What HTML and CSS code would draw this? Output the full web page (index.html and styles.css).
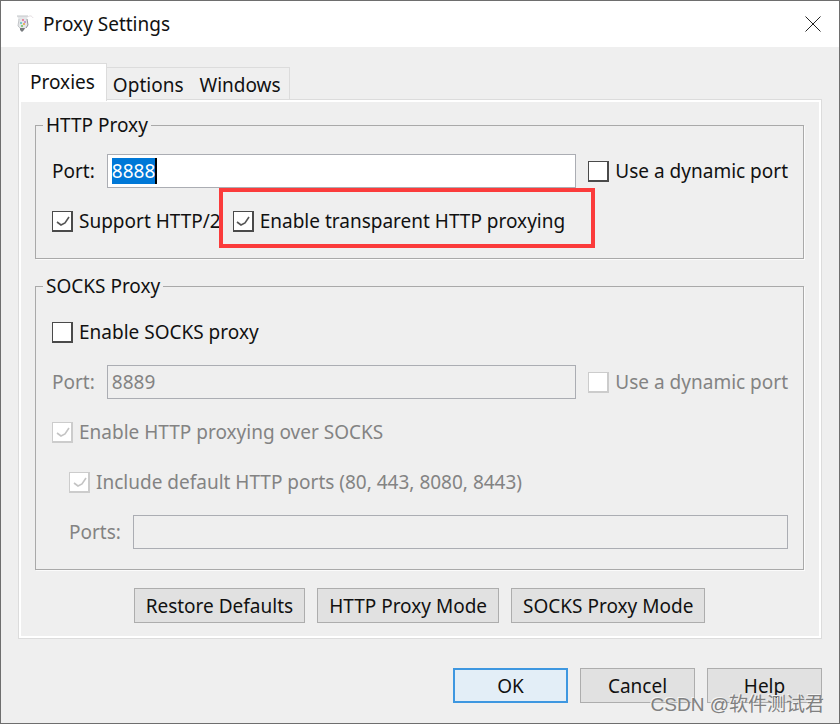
FILE: index.html
```
<!DOCTYPE html>
<html lang="en">
<head>
<meta charset="utf-8">
<title>Proxy Settings</title>
<link rel="stylesheet" href="styles.css">
</head>
<body>

<div class="window">
    <header class="titlebar">
        <svg class="app-icon" viewBox="0 0 18 18" aria-hidden="true">
            <path d="M1 1 L12 1 L11 4 L12 11 L9 14 L4 14 L2 11 L3 5 Z" fill="#e4e6e8"/>
            <path d="M1 1 L12 1 M3 4 L2 11 L4 13" fill="none" stroke="#c3c6c9"/>
            <path d="M11 4 L12 10 L10 13" fill="none" stroke="#8e9296"/>
            <path d="M4 13 L9 13 L8 15 L6 17 L4 15 Z" fill="#777b7e"/>
            <path d="M12 2 C14 0 16 1 17 3" fill="none" stroke="#e2dcdf"/>
            <circle cx="7" cy="5" r="1" fill="#e86a8a"/>
            <circle cx="5" cy="8" r="1" fill="#58bfc0"/>
            <circle cx="8" cy="9" r="1" fill="#e9a33c"/>
            <circle cx="6" cy="11" r="1" fill="#6fbf5b"/>
            <circle cx="9" cy="7" r="1" fill="#b582cf"/>
        </svg>
        <h1>Proxy Settings</h1>
        <button class="close" type="button" aria-label="Close">
            <svg viewBox="0 0 16 16" aria-hidden="true"><path d="M0.5 0.5 L15.5 15.5 M15.5 0.5 L0.5 15.5"/></svg>
        </button>
    </header>

    <form class="content">
        <div class="tabs" role="tablist">
            <button class="tab active" type="button" role="tab" aria-selected="true">Proxies</button>
            <div class="tab-group">
                <button class="tab" type="button" role="tab">Options</button>
                <button class="tab" type="button" role="tab">Windows</button>
            </div>
        </div>

        <div class="panel" role="tabpanel">
            <fieldset class="group">
                <legend>HTTP Proxy</legend>
                <div class="row">
                    <label class="field-label" for="http-port">Port:</label>
                    <span class="field">
                        <input class="text" id="http-port" type="text" value="8888">
                        <span class="caret"></span>
                    </span>
                    <label class="check"><input type="checkbox">Use a dynamic port</label>
                </div>
                <div class="row">
                    <label class="check"><input type="checkbox" checked>Support HTTP/2</label>
                    <label class="check highlight"><input type="checkbox" checked>Enable transparent HTTP proxying</label>
                </div>
            </fieldset>

            <fieldset class="group">
                <legend>SOCKS Proxy</legend>
                <div class="row">
                    <label class="check"><input type="checkbox">Enable SOCKS proxy</label>
                </div>
                <div class="row disabled">
                    <label class="field-label" for="socks-port">Port:</label>
                    <span class="field"><input class="text" id="socks-port" type="text" value="8889" disabled></span>
                    <label class="check"><input type="checkbox" disabled>Use a dynamic port</label>
                </div>
                <div class="row disabled">
                    <label class="check"><input type="checkbox" checked disabled>Enable HTTP proxying over SOCKS</label>
                </div>
                <div class="row disabled indent">
                    <label class="check"><input type="checkbox" checked disabled>Include default HTTP ports (80, 443, 8080, 8443)</label>
                </div>
                <div class="row disabled indent">
                    <label class="field-label" for="ports">Ports:</label>
                    <span class="field"><input class="text" id="ports" type="text" disabled></span>
                </div>
            </fieldset>

            <div class="buttons modes">
                <button class="btn" type="button">Restore Defaults</button>
                <button class="btn" type="button">HTTP Proxy Mode</button>
                <button class="btn" type="button">SOCKS Proxy Mode</button>
            </div>
        </div>

        <div class="buttons actions">
            <button class="btn primary" type="button">OK</button>
            <button class="btn" type="button">Cancel</button>
            <button class="btn" type="button">Help</button>
        </div>
    </form>

    <div class="watermark">CSDN @软件测试君</div>
</div>

<script src="script.js"></script>
</body>
</html>
```
FILE: styles.css
```
* {
    box-sizing: border-box;
}

body {
    margin: 0;
    background: #efefef;
    color: #111111;
    font-family: "Noto Sans", "Noto Sans CJK SC", sans-serif;
    font-size: 19px;
    line-height: 26px;
}

button,
input {
    font: inherit;
    color: inherit;
    margin: 0;
}

.window {
    position: relative;
    min-height: 100vh;
    border: 1px solid #6e6e6e;
}

.titlebar {
    display: flex;
    align-items: center;
    height: 46px;
    padding: 0 18px 0 15px;
    background: #ffffff;
}

.titlebar h1 {
    flex: 1;
    margin: 0;
    font-size: 19px;
    font-weight: 400;
}

.app-icon {
    width: 18px;
    height: 18px;
    margin-right: 9px;
}

.close {
    display: flex;
    padding: 0;
    border: 0;
    background: none;
}

.close svg {
    width: 16px;
    height: 16px;
    fill: none;
    stroke: #222222;
}

.content {
    padding: 16px 17px 20px;
}

/* tabs */
.tabs {
    display: flex;
    align-items: flex-end;
}

.tab {
    padding: 4px 8px 2px;
    border: 0;
    background: none;
}

.tab.active {
    z-index: 1;
    height: 38px;
    margin-bottom: -2px;
    padding: 0 11px 2px;
    border: 1px solid #dcdcdc;
    border-bottom: 0;
    background: #ffffff;
}

.tab-group {
    display: flex;
    height: 32px;
    margin-left: -2px;
    border: 1px solid #dcdcdc;
    border-width: 1px 1px 0 0;
}

.panel {
    padding: 12px 17px 15px 16px;
    border: 1px solid #dcdcdc;
    box-shadow: inset 0 0 0 2px #ffffff;
}

/* group boxes */
.group {
    display: flex;
    flex-direction: column;
    gap: 16px;
    min-width: 0;
    margin: 0 0 14px;
    padding: 16px 15px 20px 16px;
    border: 1px solid #a9a9a9;
    box-shadow: 1px 1px 0 #fbfbfb;
}

.group legend {
    margin-left: -9px;
    padding: 0 3px;
}

.row {
    display: flex;
    align-items: center;
    gap: 12px;
    height: 34px;
    white-space: nowrap;
}

.row.disabled {
    color: #838383;
}

.row.indent {
    padding-left: 17px;
}

.field {
    position: relative;
    display: flex;
    flex: 1;
}

.text {
    width: 100%;
    height: 34px;
    padding: 0 4px;
    border: 1px solid #abadb3;
    border-radius: 0;
    background: #ffffff;
    outline: none;
}

.text:disabled {
    background: #efefef;
}

.text::selection {
    background: #0078d7;
    color: #ffffff;
}

.caret {
    position: absolute;
    top: 4px;
    left: 48px;
    width: 2px;
    height: 26px;
    background: #000000;
}

.check {
    display: flex;
    align-items: center;
    gap: 6px;
}

.check input {
    appearance: none;
    width: 21px;
    height: 21px;
    border: 2px solid #4a4a4a;
    border-width: 1px 2px 2px 1px;
    background: #ffffff center / 17px 17px no-repeat;
}

.check input:checked {
    background-image: url("data:image/svg+xml,%3Csvg xmlns='http://www.w3.org/2000/svg' viewBox='0 0 17 17'%3E%3Cpath d='M3 10 L7 13 L11 11 L15 5' fill='none' stroke='%23555' stroke-width='1.6'/%3E%3C/svg%3E");
}

.check input:disabled {
    border-color: #cccccc;
}

.check input:checked:disabled {
    background-image: url("data:image/svg+xml,%3Csvg xmlns='http://www.w3.org/2000/svg' viewBox='0 0 17 17'%3E%3Cpath d='M3 10 L7 13 L11 11 L15 5' fill='none' stroke='%23c4c4c4' stroke-width='1.6'/%3E%3C/svg%3E");
}

.highlight {
    position: relative;
}

.highlight::after {
    content: "";
    position: absolute;
    inset: -20px -30px -14px -14px;
    border: 4px solid #fb3b3b;
}

/* buttons */
.buttons {
    display: flex;
    gap: 12px;
}

.btn {
    height: 35px;
    padding: 0 11px;
    border: 1px solid #adadad;
    background: #e1e1e1;
    white-space: nowrap;
}

.btn.primary {
    border: 2px solid #3e97e0;
    background: #e3eef7;
}

.modes {
    justify-content: center;
    margin-top: 18px;
}

.actions {
    justify-content: flex-end;
    margin-top: 29px;
}

.actions .btn {
    width: 115px;
}

.watermark {
    position: absolute;
    right: 15px;
    bottom: 5px;
    color: #808080;
    font-family: "Liberation Sans", "Noto Sans CJK SC", sans-serif;
    font-size: 19px;
    text-shadow: -1px -1px 0 #f4f4f4;
    pointer-events: none;
}
```
FILE: script.js
```
const port = document.getElementById('http-port');
port.focus();
port.select();
```
